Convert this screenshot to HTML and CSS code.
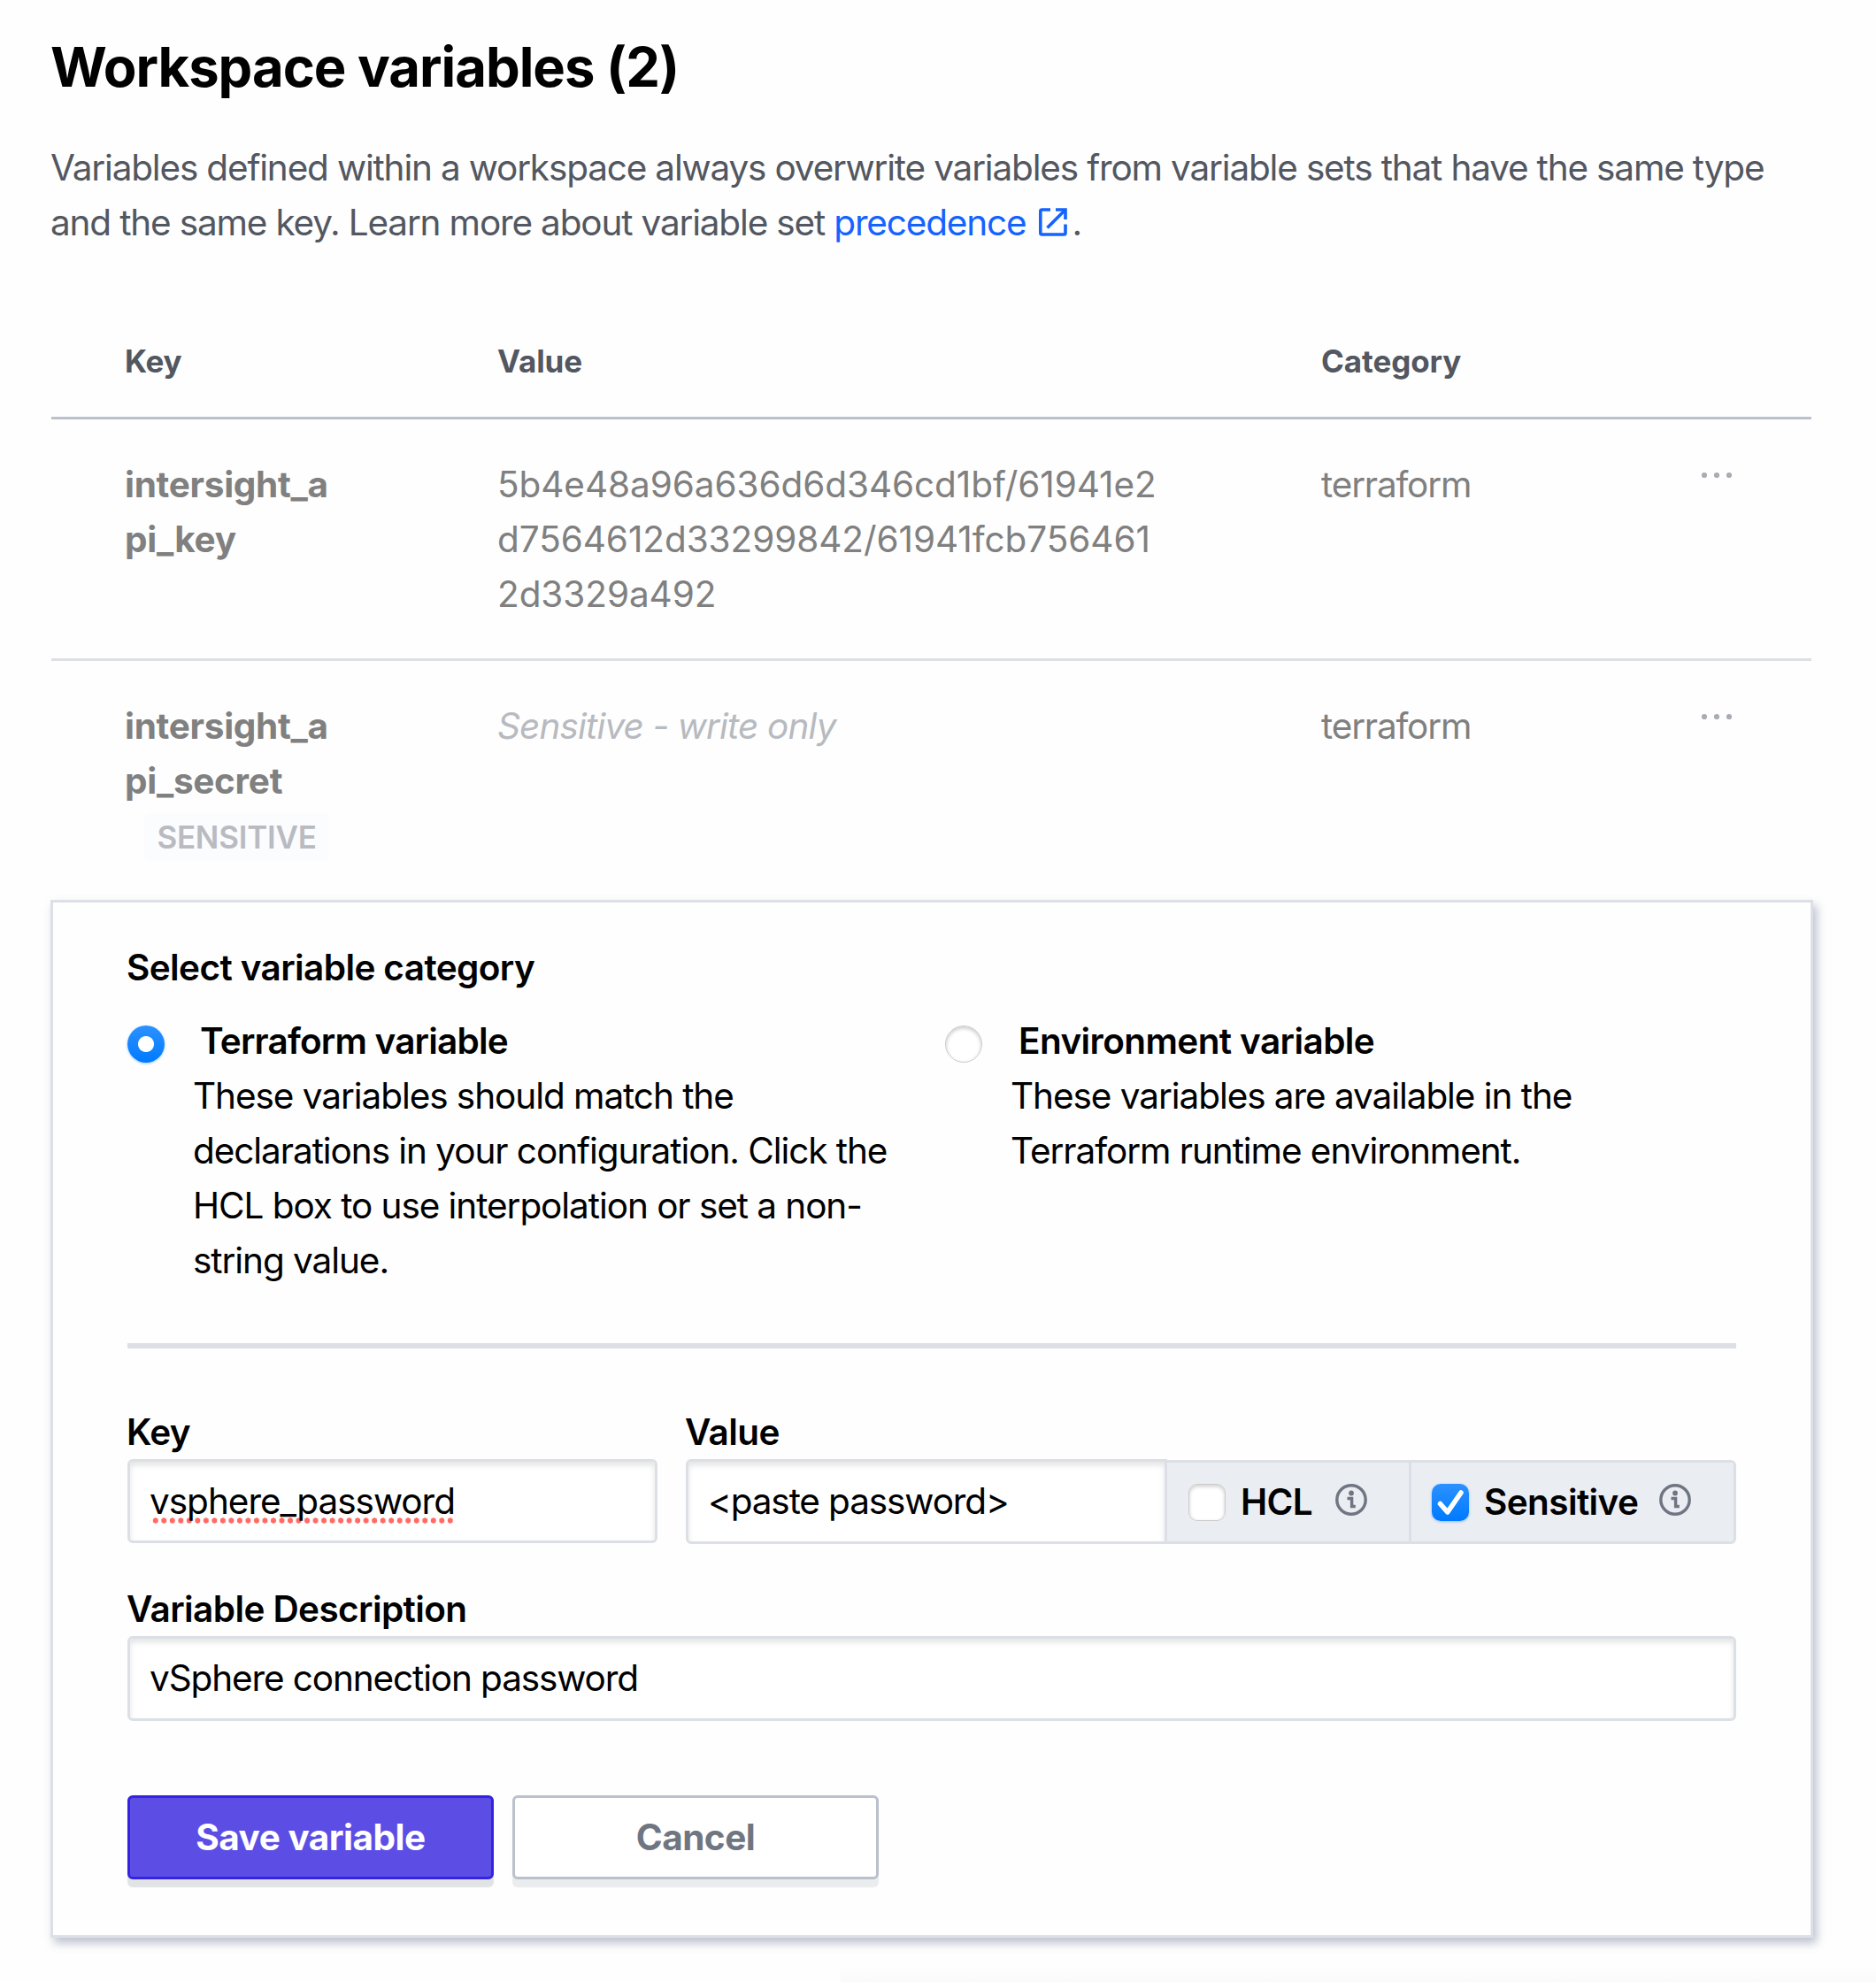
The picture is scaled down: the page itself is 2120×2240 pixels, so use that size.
FILE: index.html
```html
<!DOCTYPE html>
<html lang="en">
<head>
<meta charset="utf-8">
<title>Workspace variables</title>
<link rel="stylesheet" href="styles.css">
</head>
<body>
<main class="page">
  <h1 class="title">Workspace variables (2)</h1>
  <p class="intro"><span class="line">Variables defined within a workspace always overwrite variables from variable sets that have the same type</span>
    <span class="line">and the same key. Learn more about variable set <a class="link" href="#">precedence<svg class="external" viewBox="0 0 32 32" fill="none" stroke="currentColor" stroke-width="3.6"><path d="M13 2H3.5Q1.8 2 1.8 3.7V28.3Q1.8 30 3.5 30H28.3Q30 30 30 28.3V18.500"/><path d="M19 2H30V13"/><path d="M30 2L9.500 22.500"/></svg></a>.</span></p>

  <section class="table">
    <div class="row head"><div class="key">Key</div><div class="value">Value</div><div class="category">Category</div></div>
    <div class="row">
      <div class="key">intersight_a<br>pi_key</div>
      <div class="value hash">5b4e48a96a636d6d346cd1bf/61941e2<br>d7564612d33299842/61941fcb756461<br>2d3329a492</div>
      <div class="category">terraform</div>
      <svg class="more" viewBox="0 0 36 8"><circle cx="4" cy="4" r="3.100"/><circle cx="18" cy="4" r="3.100"/><circle cx="32" cy="4" r="3.100"/></svg>
    </div>
    <div class="row last">
      <div class="key">intersight_a<br>pi_secret<div class="badge">SENSITIVE</div></div>
      <div class="value muted">Sensitive - write only</div>
      <div class="category">terraform</div>
      <svg class="more" viewBox="0 0 36 8"><circle cx="4" cy="4" r="3.100"/><circle cx="18" cy="4" r="3.100"/><circle cx="32" cy="4" r="3.100"/></svg>
    </div>
  </section>

  <form class="panel">
    <h2 class="label heading">Select variable category</h2>
    <div class="options">
      <div class="option">
        <span class="radio on"></span>
        <div><div class="label option-title terraform">Terraform variable</div>
        <p class="option-text">These variables should match the<br>declarations in your configuration. Click the<br>HCL box to use interpolation or set a non-<br>string value.</p></div>
      </div>
      <div class="option">
        <span class="radio"></span>
        <div><div class="label option-title">Environment variable</div>
        <p class="option-text">These variables are available in the<br>Terraform runtime environment.</p></div>
      </div>
    </div>
    <hr class="divider">
    <div class="fields">
      <div class="field field-key">
        <div class="label">Key</div>
        <div class="input"><span class="misspelled">vsphere_password</span></div>
      </div>
      <div class="field field-value">
        <div class="label">Value</div>
        <div class="group">
          <div class="input paste">&lt;paste password&gt;</div>
          <div class="addon hcl"><span class="check"></span><span class="label">HCL</span>
            <svg class="info" viewBox="0 0 36 36"><circle cx="18" cy="18" r="16.200"/><circle class="dot" cx="18" cy="10.500" r="2.900"/><path d="M13.500 16.500H18.600V25.500H22.800"/></svg></div>
          <div class="addon sensitive"><span class="check on"><svg viewBox="0 0 42 42"><path d="M9.500 22.500L17.800 32L33 10"/></svg></span><span class="label">Sensitive</span>
            <svg class="info" viewBox="0 0 36 36"><circle cx="18" cy="18" r="16.200"/><circle class="dot" cx="18" cy="10.500" r="2.900"/><path d="M13.500 16.500H18.600V25.500H22.800"/></svg></div>
        </div>
      </div>
    </div>
    <div class="field description">
      <div class="label">Variable Description</div>
      <div class="input">vSphere connection password</div>
    </div>
    <div class="actions">
      <button type="button" class="button primary">Save variable</button>
      <button type="button" class="button">Cancel</button>
    </div>
  </form>
</main>
</body>
</html>
```
FILE: styles.css
```css
* { box-sizing: border-box; }
html { background: #fefefe; }
body {
  margin: 0;
  height: 2240px;
  overflow: hidden;
  background: linear-gradient(#fefefe, #fafafa) no-repeat 950px 2222px / 1170px 18px;
  color: #000;
  font: 400 40.5px/62px Inter, "Liberation Sans", sans-serif;
  letter-spacing: -1.17px;
}
.page { padding: 38px 71px 0 57px; }
.title { margin: 0 0 45px; font-size: 61.5px; line-height: 76px; font-weight: 700; letter-spacing: -1px; }
.intro { margin: 0; color: #525761; }
.line { display: block; white-space: nowrap; }
.link { color: #1563ff; text-decoration: none; }
.external { width: 32px; height: 32px; margin: 0 5px 0 15px; vertical-align: -1px; }

.table { margin: 57px 2px 0 1px; color: #808080; }
.row { display: flex; padding: 43px 0 41px; border-bottom: 3px solid #dce0e6; }
.row > div { white-space: nowrap; }
.head { padding: 42px 0 37px; border-color: #bac1cc; color: #525761; font-size: 35px; line-height: 52px; font-weight: 700; }
.last { padding-bottom: 44px; border-bottom: 0; }
.key { width: 504px; padding-left: 83px; font-weight: 700; letter-spacing: -0.3px; }
.value { width: 931px; }
.head .value, .head .category { letter-spacing: -0.1px; }
.hash { letter-spacing: -0.07px; }
.category { width: 428px; }
.more { width: 36px; height: 8px; margin-top: 16px; margin-left: 1px; fill: #a9adb3; }
.muted { color: #b7babf; font-style: italic; letter-spacing: -0.87px; }
.badge { width: 209px; height: 54px; margin: 5px 0 0 22px; border-radius: 5px; background: #fbfcfe; color: #b9bbc1; font-size: 35px; line-height: 54px; font-weight: 600; letter-spacing: -0.25px; text-align: center; }

.panel { height: 1173px; padding: 43px 84px 0; border: 3px solid #dce0e6; background: #fefefe; box-shadow: 4px 6px 10px rgba(97, 110, 140, .42); }
.label { margin-left: -1px; font-weight: 600; letter-spacing: -0.6px; white-space: nowrap; }
.heading { margin: 0 0 0 -1px; font-size: 40.5px; line-height: 62px; }
.options { display: flex; margin-top: 21px; }
.option { display: flex; flex: none; width: 924px; }
.option p { margin: 0 0 0 -1px; }
.option-title { padding-left: 9px; }
.terraform { padding-left: 8px; letter-spacing: -0.8px; }
.option-text { letter-spacing: -1.06px; white-space: nowrap; }
.radio { flex: none; width: 42px; height: 42px; margin: 13px 33px 0 0; border-radius: 50%; background: #fff; border: 1px solid #ccc; box-shadow: inset 0 2px 4px rgba(0, 0, 0, .22); }
.radio.on { border: 0; background: radial-gradient(circle, #fff 8.5px, transparent 9.5px), linear-gradient(#2c91ff, #007aff); box-shadow: 0 1px 3px rgba(0, 122, 255, .4); }
.divider { height: 6px; margin: 62px 0 64px; border: 0; background: #dce0e6; }

.fields { display: flex; gap: 32px; }
.field > .label { margin-bottom: -1px; }
.field-key { width: 599px; }
.field-value { width: 1187px; }
.input { height: 95px; padding: 0 22px; border: 3px solid #dce0e6; border-radius: 6px; background: #fff; line-height: 89px; letter-spacing: -1.12px; box-shadow: inset 0 4px 6px rgba(0, 0, 0, .11); white-space: nowrap; }
.misspelled { display: inline-block; height: 89px; letter-spacing: -1.02px; background: radial-gradient(circle at 4.760px 3.500px, #ff6b64 2.900px, transparent 3.400px) repeat-x 2px 63px / 9.530px 7px; }
.group { display: flex; }
.paste { width: 544px; height: 96px; border-radius: 6px 0 0 6px; }
.addon { display: flex; align-items: center; height: 95px; margin-top: 1px; border: 3px solid #dce0e6; border-left: 0; background: #eaedf2; }
.hcl { width: 276px; padding-left: 24px; }
.hcl .label { width: 82px; }
.sensitive { width: 367px; padding-left: 23px; border-radius: 0 6px 6px 0; }
.sensitive .label { width: 173px; }
.check { flex: none; width: 42px; height: 42px; margin-right: 18px; border: 1px solid #ccc; border-radius: 10px; background: #fff; box-shadow: inset 0 2px 4px rgba(0, 0, 0, .2); }
.check.on { border: 0; background: linear-gradient(#2c91ff, #007aff); box-shadow: 0 1px 3px rgba(0, 122, 255, .4); }
.check svg { display: block; fill: none; stroke: #fff; stroke-width: 5.6; stroke-linecap: round; stroke-linejoin: round; }
.info { flex: none; width: 36px; height: 36px; margin: 0 0 5px 25px; fill: none; stroke: #6f7682; stroke-width: 3.4; }
.info .dot { fill: #6f7682; stroke: none; }
.description { margin-top: 43px; }
.description .input { height: 96px; }
.actions { display: flex; gap: 21px; margin-top: 84px; }
.button { width: 414px; height: 95px; padding: 0; border: 3px solid #bac1cc; border-radius: 6px; background: #fff; color: #6f7682; font: 700 40.5px/89px Inter, sans-serif; letter-spacing: -0.5px; box-shadow: 0 9px 1px #ebecee; }
.primary { border-color: #3423df; background: #5c4ee5; color: #fff; box-shadow: 0 9px 1px #e2e3e5; }
```
